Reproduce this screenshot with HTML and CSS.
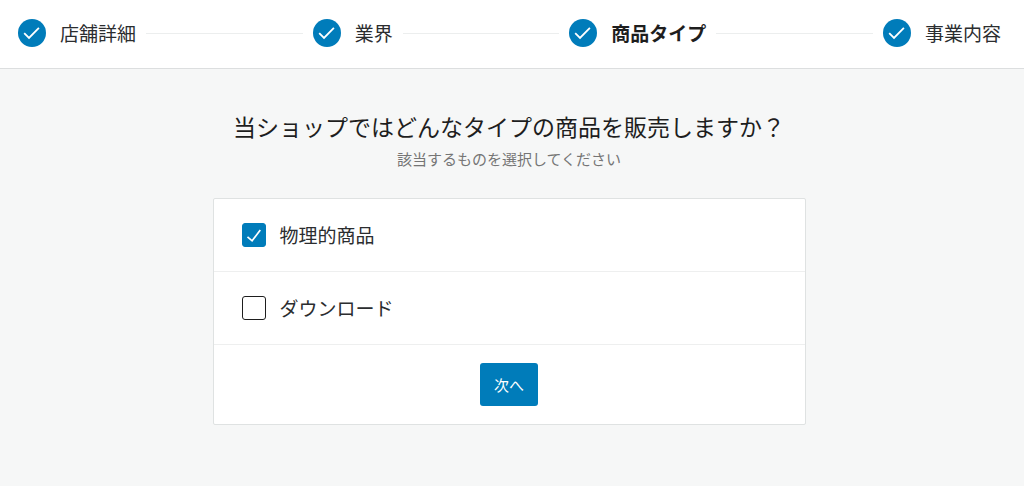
FILE: index.html
```html
<!DOCTYPE html>
<html lang="ja">
<head>
<meta charset="utf-8">
<title>商品タイプ</title>
<link rel="stylesheet" href="styles.css">
</head>
<body>
<header class="header">
  <ol class="stepper">
    <li class="step"><svg class="step-icon" viewBox="0 0 28 28" aria-hidden="true"><circle cx="14" cy="14" r="14"/><path d="M6.2 14.2l4.8 4.7 9.9-10.1"/></svg><span>店舗詳細</span></li>
    <li class="divider" aria-hidden="true"></li>
    <li class="step"><svg class="step-icon" viewBox="0 0 28 28" aria-hidden="true"><circle cx="14" cy="14" r="14"/><path d="M6.2 14.2l4.8 4.7 9.9-10.1"/></svg><span>業界</span></li>
    <li class="divider" aria-hidden="true"></li>
    <li class="step step-current" aria-current="step"><svg class="step-icon" viewBox="0 0 28 28" aria-hidden="true"><circle cx="14" cy="14" r="14"/><path d="M6.2 14.2l4.8 4.7 9.9-10.1"/></svg><span>商品タイプ</span></li>
    <li class="divider" aria-hidden="true"></li>
    <li class="step"><svg class="step-icon" viewBox="0 0 28 28" aria-hidden="true"><circle cx="14" cy="14" r="14"/><path d="M6.2 14.2l4.8 4.7 9.9-10.1"/></svg><span>事業内容</span></li>
  </ol>
</header>
<main class="main">
  <h1 class="title">当ショップではどんなタイプの商品を販売しますか？</h1>
  <p class="subtitle">該当するものを選択してください</p>
  <form class="card">
    <label class="option"><span class="box"><input class="checkbox" type="checkbox" checked><svg class="tick" viewBox="0 0 24 24" aria-hidden="true"><path d="M5.5 13.8l4.6 4L18.3 7"/></svg></span><span>物理的商品</span></label>
    <label class="option"><span class="box"><input class="checkbox" type="checkbox"><svg class="tick" viewBox="0 0 24 24" aria-hidden="true"><path d="M5.5 13.8l4.6 4L18.3 7"/></svg></span><span>ダウンロード</span></label>
    <div class="actions"><button class="next" type="button">次へ</button></div>
  </form>
</main>
</body>
</html>
```
FILE: styles.css
```css
* { box-sizing: border-box; }
body {
  margin: 0;
  min-height: 100vh;
  background: #f6f7f7;
  color: #2b2d2f;
  font-family: "Noto Sans CJK JP", sans-serif;
}
.header {
  background: #fff;
  border-bottom: 1px solid #dcdedf;
}
.stepper {
  display: flex;
  align-items: center;
  gap: 10px;
  height: 68px;
  margin: 0;
  padding: 0 23px 2px 18px;
  list-style: none;
}
.step {
  display: flex;
  align-items: center;
  gap: 14px;
  font-size: 19px;
  line-height: 28px;
  white-space: nowrap;
}
.step-current { color: #1e1e1e; font-weight: 700; }
.step-icon { width: 28px; height: 28px; fill: #007cba; }
.step-icon path { fill: none; stroke: #fff; stroke-width: 1.8; }
.divider { flex: 1; height: 1px; background: #eceeee; }
.main {
  display: flex;
  flex-direction: column;
  align-items: center;
  padding: 39px 30px 40px 24px;
}
.title {
  margin: 0;
  color: #1e1e1e;
  font-size: 23px;
  font-weight: 400;
  line-height: 36px;
}
.subtitle {
  margin: 4px 0 0;
  color: #757575;
  font-size: 15px;
  line-height: 22px;
}
.card {
  width: 100%;
  max-width: 593px;
  margin-top: 28px;
  background: #fff;
  border: 1px solid #dfe2e2;
  border-radius: 2px;
}
.option {
  display: flex;
  align-items: center;
  gap: 14px;
  padding: 22px 28px;
  border-bottom: 1px solid #eeefef;
  font-size: 19px;
  line-height: 28px;
}
.box { display: grid; width: 24px; height: 24px; }
.checkbox, .tick { grid-area: 1 / 1; width: 24px; height: 24px; margin: 0; }
.checkbox {
  appearance: none;
  background: #fff;
  border: 1px solid #1e1e1e;
  border-radius: 3px;
}
.checkbox:checked { background: #007cba; border-color: #007cba; }
.tick { visibility: hidden; fill: none; stroke: #fff; stroke-width: 1.7; pointer-events: none; }
.checkbox:checked + .tick { visibility: visible; }
.actions { display: flex; justify-content: center; padding: 18px; }
.next {
  height: 43px;
  padding: 0 14px;
  background: #007cba;
  border: 0;
  border-radius: 3px;
  color: #fff;
  font: 400 15px/22px "Noto Sans CJK JP", sans-serif;
}
```
